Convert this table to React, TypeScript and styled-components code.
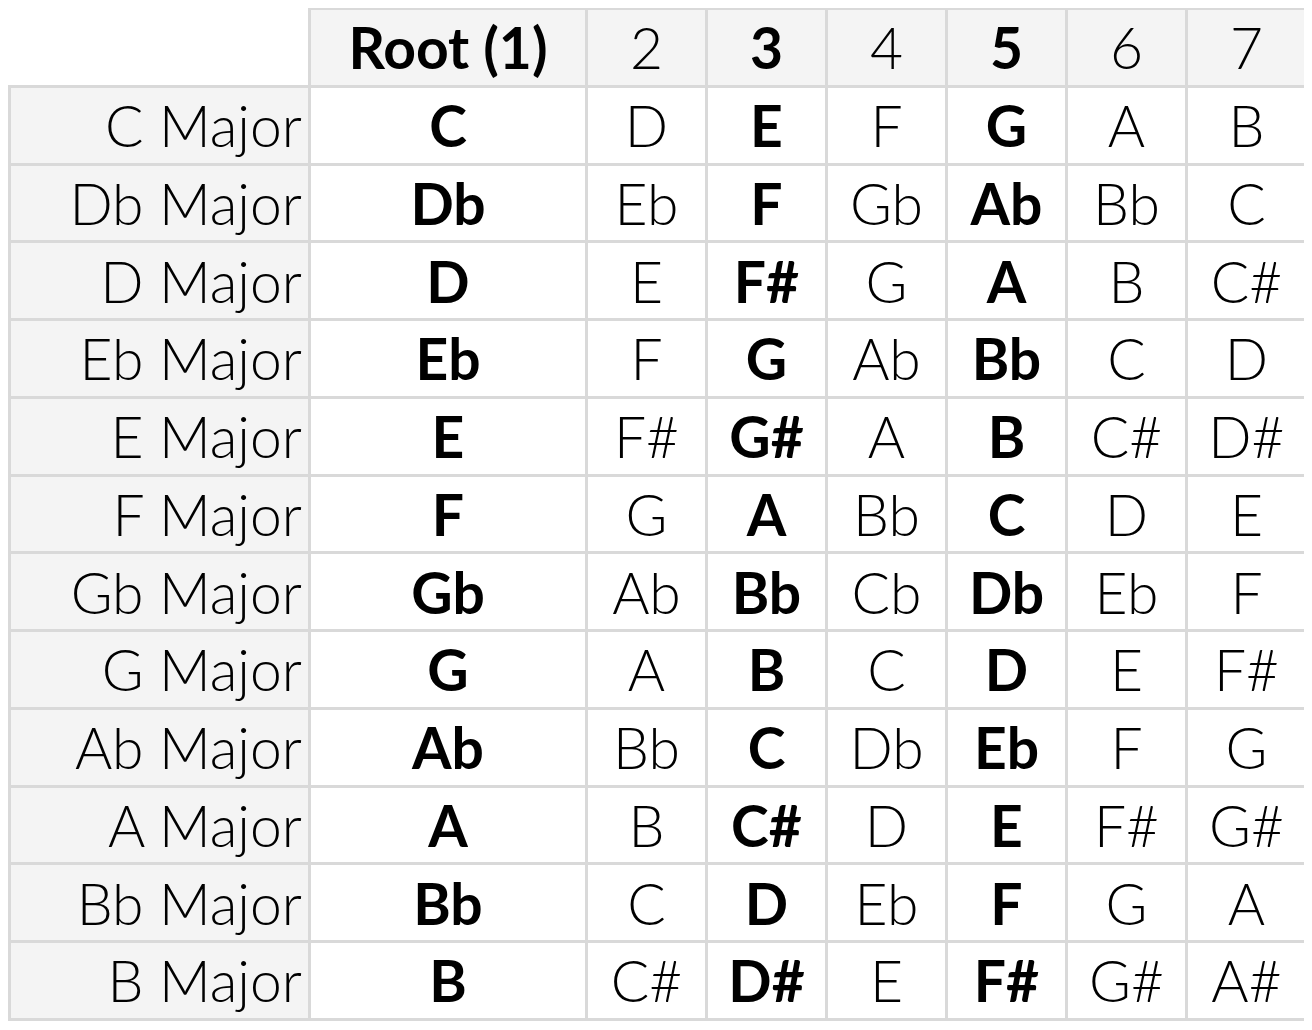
import React from 'react';
import styled, {createGlobalStyle} from 'styled-components';

const GlobalStyle = createGlobalStyle`
  body {
    margin: 8px;
    background: #ffffff;
    font-family: Lato, "Liberation Sans", sans-serif;
    color: #000;
  }
`;

const scales: string[][] = [
    ['C', 'D', 'E', 'F', 'G', 'A', 'B'],
    ['Db', 'Eb', 'F', 'Gb', 'Ab', 'Bb', 'C'],
    ['D', 'E', 'F#', 'G', 'A', 'B', 'C#'],
    ['Eb', 'F', 'G', 'Ab', 'Bb', 'C', 'D'],
    ['E', 'F#', 'G#', 'A', 'B', 'C#', 'D#'],
    ['F', 'G', 'A', 'Bb', 'C', 'D', 'E'],
    ['Gb', 'Ab', 'Bb', 'Cb', 'Db', 'Eb', 'F'],
    ['G', 'A', 'B', 'C', 'D', 'E', 'F#'],
    ['Ab', 'Bb', 'C', 'Db', 'Eb', 'F', 'G'],
    ['A', 'B', 'C#', 'D', 'E', 'F#', 'G#'],
    ['Bb', 'C', 'D', 'Eb', 'F', 'G', 'A'],
    ['B', 'C#', 'D#', 'E', 'F#', 'G#', 'A#'],
];

const headers = ['Root (1)', '2', '3', '4', '5', '6', '7'];
const strong = [true, false, true, false, true, false, false];

function App() {
    return (
        <>
            <GlobalStyle/>
            <Table>
                <colgroup>
                    <Col $w={300}/>
                    <Col $w={277}/>
                    {headers.slice(1).map(h => <Col key={h} $w={120}/>)}
                </colgroup>
                <thead>
                <tr>
                    <Corner/>
                    {headers.map((h, i) => (
                        <HeadCell key={h} $bold={strong[i]}>{h}</HeadCell>
                    ))}
                </tr>
                </thead>
                <tbody>
                {scales.map(row => (
                    <tr key={row[0]}>
                        <LabelCell>{row[0]} Major</LabelCell>
                        {row.map((note, i) => (
                            <NoteCell key={i} $bold={strong[i]}>{note}</NoteCell>
                        ))}
                    </tr>
                ))}
                </tbody>
            </Table>
        </>
    );
}

export default App;

const Table = styled.table`
  border-collapse: collapse;
  table-layout: fixed;
  width: 1300px;
  margin-top: -1px;

  & td, & th {
    height: 77.75px;
    padding: 1px 0 0 0;
    box-sizing: border-box;
    font-size: 57px;
    line-height: 1;
    vertical-align: middle;
  }
`

const Col = styled.col<{ $w: number }>`
  width: ${p => p.$w}px;
`

const Corner = styled.th`
  border: none;
  background: transparent;
`

const HeadCell = styled.th<{ $bold: boolean }>`
  border: 3px solid #d9d9d9;
  background: #f4f4f4;
  text-align: center;
  font-weight: ${p => p.$bold ? 700 : 300};
`

const LabelCell = styled.td`
  border: 3px solid #d9d9d9;
  background: #f4f4f4;
  text-align: right;
  padding-right: 6px !important;
  font-weight: 300;
  white-space: nowrap;
`

const NoteCell = styled.td<{ $bold: boolean }>`
  border: 3px solid #d9d9d9;
  background: #ffffff;
  text-align: center;
  font-weight: ${p => p.$bold ? 700 : 300};
`
